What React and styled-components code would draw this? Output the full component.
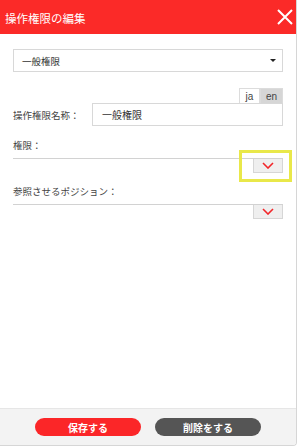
import styled, { createGlobalStyle } from "styled-components";

const GlobalStyle = createGlobalStyle`
  html, body {
    margin: 0;
    padding: 0;
    background: #ffffff;
  }
  body {
    font-family: "Noto Sans CJK JP", "Noto Sans", sans-serif;
    color: #333;
  }
`;

const Chevron = () => (
  <svg width="12" height="7" viewBox="0 0 12 7">
    <path d="M1 1 L6 6 L11 1" fill="none" stroke="#f2262a" strokeWidth="1.6" />
  </svg>
);

const Field = ({ label }) => (
  <Section>
    <Label>{label}</Label>
    <Rule />
    <ToggleRow>
      <Toggle>
        <Chevron />
      </Toggle>
    </ToggleRow>
  </Section>
);

export default function App() {
  return (
    <>
      <GlobalStyle />
      <Panel>
        <Header>
          <Title>操作権限の編集</Title>
          <Close>
            <svg width="16" height="16" viewBox="0 0 16 16">
              <path d="M1 1 L15 15 M15 1 L1 15" stroke="#fff" strokeWidth="2" />
            </svg>
          </Close>
        </Header>

        <Body>
          <Select>
            <span>一般権限</span>
            <Caret />
          </Select>

          <Tabs>
            <Tab>ja</Tab>
            <Tab $active>en</Tab>
          </Tabs>

          <NameRow>
            <Label>操作権限名称：</Label>
            <Input>一般権限</Input>
          </NameRow>

          <Highlighted>
            <Field label="権限：" />
            <Marker />
          </Highlighted>
          <Field label="参照させるポジション：" />
        </Body>

        <Footer>
          <Button $color="#fb2628">保存する</Button>
          <Button $color="#555555">削除をする</Button>
        </Footer>
      </Panel>
    </>
  );
}

const Panel = styled.div`
  width: 296px;
  height: 445px;
  display: flex;
  flex-direction: column;
  border-right: 1px solid #d6d6d6;
  border-bottom: 1px solid #d6d6d6;
  border-bottom-right-radius: 4px;
  overflow: hidden;
  background: #fff;
`;

const Header = styled.div`
  height: 34px;
  background: #fb2a28;
  display: flex;
  align-items: center;
  justify-content: space-between;
  padding: 0 0 0 5px;
`;

const Title = styled.div`
  color: #fff;
  font-size: 11.5px;
  margin-top: 1px;
`;

const Close = styled.div`
  width: 18px;
  height: 18px;
  display: flex;
  align-items: center;
  justify-content: center;
  margin-right: 2px;
`;

const Body = styled.div`
  flex: 1;
  padding: 15px 13px 0 13px;
  display: flex;
  flex-direction: column;
`;

const Select = styled.div`
  height: 23px;
  box-sizing: border-box;
  border: 1px solid #d8d8d8;
  display: flex;
  align-items: center;
  justify-content: space-between;
  padding: 0 6px 0 8px;
  font-size: 9.5px;
  color: #333;
`;

const Caret = styled.span`
  width: 0;
  height: 0;
  border-left: 3px solid transparent;
  border-right: 3px solid transparent;
  border-top: 3px solid #222;
`;

const Tabs = styled.div`
  display: flex;
  justify-content: flex-end;
  margin-top: 16px;
`;

const Tab = styled.div`
  width: ${(p) => (p.$active ? "23px" : "21px")};
  height: 15px;
  box-sizing: border-box;
  border: 1px solid #dcdcdc;
  border-bottom: none;
  background: ${(p) => (p.$active ? "#d6d6d6" : "#fff")};
  font-family: "Liberation Sans", Arial, sans-serif;
  font-size: 10px;
  line-height: 15px;
  text-align: center;
  color: #444;
`;

const NameRow = styled.div`
  display: flex;
  align-items: center;
  justify-content: space-between;
`;

const Label = styled.div`
  font-size: 9.5px;
  color: #444;
`;

const Input = styled.div`
  width: 191px;
  height: 23px;
  box-sizing: border-box;
  border: 1px solid #d8d8d8;
  display: flex;
  align-items: center;
  padding-left: 9px;
  font-size: 10px;
  color: #333;
`;

const Highlighted = styled.div`
  position: relative;
  margin-top: 11px;
`;

const Marker = styled.div`
  position: absolute;
  left: 226px;
  top: 13px;
  width: 53px;
  height: 32px;
  box-sizing: border-box;
  border: 3px solid #e9e84a;
  pointer-events: none;
`;

const Section = styled.div`
  display: flex;
  flex-direction: column;
  ${Label} {
    line-height: 16px;
    margin-bottom: 5px;
  }
`;

const Rule = styled.div`
  height: 1px;
  background: #d2d2d2;
`;

const ToggleRow = styled.div`
  display: flex;
  justify-content: flex-end;
  margin-bottom: 10px;
`;

const Toggle = styled.div`
  width: 30px;
  height: 14px;
  box-sizing: border-box;
  background: #efefef;
  border: 1px solid #d6d6d6;
  border-top: none;
  display: flex;
  align-items: center;
  justify-content: center;
`;

const Footer = styled.div`
  height: 36px;
  background: #f3f3f3;
  border-top: 1px solid #e6e6e6;
  display: flex;
  align-items: center;
  justify-content: center;
  gap: 14px;
`;

const Button = styled.div`
  width: 106px;
  height: 18px;
  border-radius: 9px;
  background: ${(p) => p.$color};
  color: #fff;
  font-size: 10px;
  font-weight: bold;
  display: flex;
  align-items: center;
  justify-content: center;
`;
